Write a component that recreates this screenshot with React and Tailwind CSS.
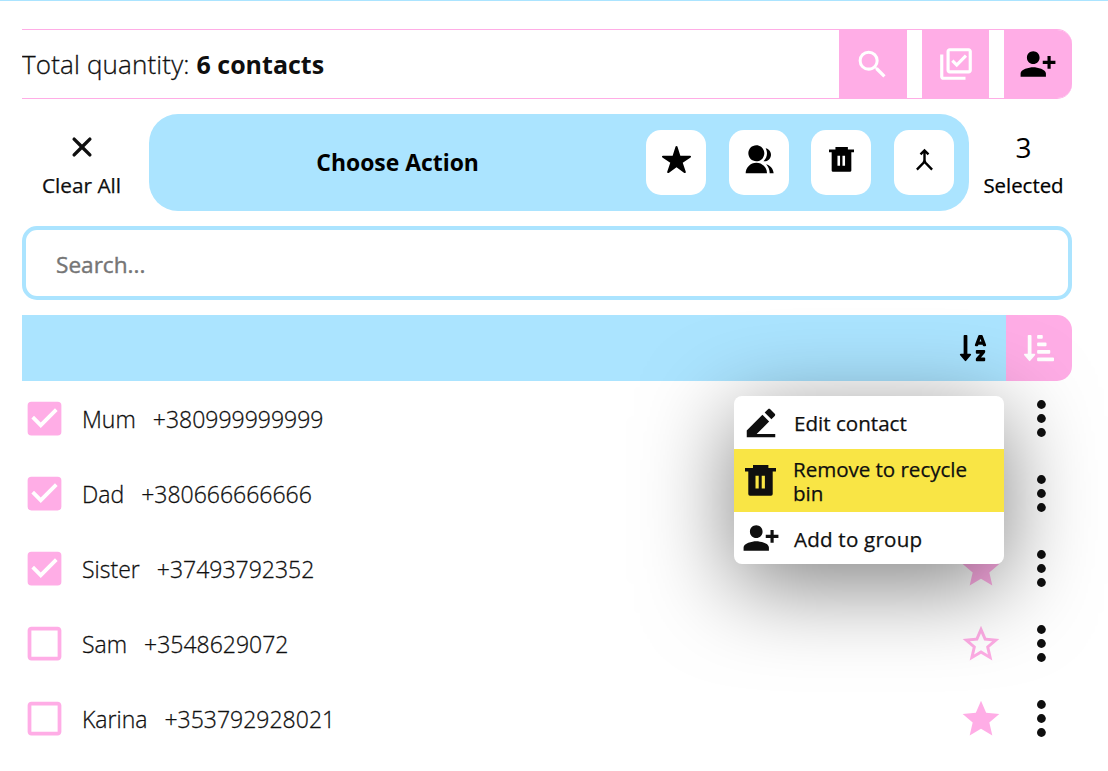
import {
  MdSearch,
  MdOutlineLibraryAddCheck,
  MdPersonAddAlt1,
  MdMerge,
  MdStar,
  MdStarOutline,
  MdCheckBox,
  MdCheckBoxOutlineBlank,
} from "react-icons/md";
import { IoStar, IoClose } from "react-icons/io5";
import { RiGroupFill, RiEdit2Fill } from "react-icons/ri";
import { FaSortAlphaDown, FaSortAmountDownAlt } from "react-icons/fa";

const contacts = [
  { name: "Mum", phone: "+380999999999", checked: true, starred: false },
  { name: "Dad", phone: "+380666666666", checked: true, starred: false },
  { name: "Sister", phone: "+37493792352", checked: true, starred: true },
  { name: "Sam", phone: "+3548629072", checked: false, starred: false },
  { name: "Karina", phone: "+353792928021", checked: false, starred: true },
];

function TrashIcon({ size }) {
  return (
    <svg width={size} height={size} viewBox="0 0 31 31" fill="currentColor">
      <path
        fillRule="evenodd"
        d="M8 0h15.4v3H31v3.4h-3.3V29a1.7 1.7 0 0 1-1.7 1.7H5A1.7 1.7 0 0 1 3.300 29V6.400H0V3h8zM10.500 10.700v12.700h3.200V10.700zM16.700 10.700v12.700h3.200V10.700z"
      />
    </svg>
  );
}

function Dots() {
  return (
    <svg width="10" height="38" viewBox="0 0 10 38" fill="#0f0f0f">
      <circle cx="5.400" cy="5.500" r="4.400" />
      <circle cx="5.400" cy="19.500" r="4.400" />
      <circle cx="5.400" cy="33.500" r="4.400" />
    </svg>
  );
}

function ActionButton({ children }) {
  return (
    <button className="flex h-[65px] w-[60px] items-center justify-center rounded-[15px] bg-white pb-1.5 text-black">
      {children}
    </button>
  );
}

function ContactRow({ contact, children }) {
  return (
    <li className="relative flex h-[75px] items-center text-[23px] font-light text-[#0f0f0f]">
      <span className="flex w-[60px] text-[#ffade6]">
        {contact.checked ? <MdCheckBox size={45} /> : <MdCheckBoxOutlineBlank size={45} />}
      </span>
      <span className="mr-[17px] pt-0.5 [-webkit-text-stroke:0.3px]">{contact.name}</span>
      <span className="flex-1 pt-0.5 [-webkit-text-stroke:0.3px]">{contact.phone}</span>
      <span className="mr-[33px] text-[#ffade6]">
        {contact.starred ? <MdStar size={44} /> : <MdStarOutline size={44} />}
      </span>
      <span className="mr-[26px] pb-px">
        <Dots />
      </span>
      {children}
    </li>
  );
}

function ContextMenu() {
  return (
    <div className="absolute top-[15px] right-[68px] z-10 w-[270px] rounded-lg bg-white text-[20.6px] leading-6 font-normal text-[#0f0f0f] shadow-[0_20px_90px_rgba(0,0,0,0.5)]">
      <div className="flex h-[53px] items-center pl-2">
        <RiEdit2Fill size={38} />
        <span className="ml-[14px] [-webkit-text-stroke:0.25px]">Edit contact</span>
      </div>
      <div className="flex h-[63px] items-center bg-[#f9e545] pl-[11px]">
        <TrashIcon size={31} />
        <span className="ml-[17px] w-[190px] tracking-[-0.05px] [-webkit-text-stroke:0.25px]">
          Remove to recycle bin
        </span>
      </div>
      <div className="flex h-[52px] items-center pl-2">
        <MdPersonAddAlt1 size={38} />
        <span className="ml-[14px] pt-0.5 tracking-[0.2px] [-webkit-text-stroke:0.25px]">Add to group</span>
      </div>
    </div>
  );
}

export default function App() {
  return (
    <main className="h-[771px] w-[1108px] overflow-hidden border-t border-[#abe4ff] bg-white pt-7 pl-[22px] font-['Open_Sans','Noto_Sans',sans-serif] text-[#0f0f0f]">
      <div className="flex w-[1050px] flex-col gap-[15px]">
        <header className="flex h-[70px] items-center gap-[15px] overflow-hidden rounded-r-[15px] border-y border-[#ffade6]">
          <p className="flex-1 text-[26px] font-light tracking-[0.15px] whitespace-nowrap [-webkit-text-stroke:0.3px]">
            Total quantity:{" "}
            <b className="text-[25px] font-bold tracking-normal [-webkit-text-stroke:0px]">6 contacts</b>
          </p>
          <button className="flex h-full w-[68px] items-center justify-center bg-[#ffade6] pr-px text-white">
            <MdSearch size={37} />
          </button>
          <button className="flex h-full w-[67px] items-center justify-center bg-[#ffade6] text-white">
            <MdOutlineLibraryAddCheck size={38} />
          </button>
          <button className="flex h-full w-[68px] items-center justify-center bg-[#ffade6] pr-px text-black">
            <MdPersonAddAlt1 size={38} />
          </button>
        </header>

        <section className="flex h-[97px] items-center">
          <div className="flex w-[119px] flex-col items-center pt-[3px]">
            <IoClose size={36} />
            <span className="mt-[5px] text-[20.8px] leading-[30px] [-webkit-text-stroke:0.25px]">Clear All</span>
          </div>
          <div className="ml-2 flex h-[97px] w-[820px] items-center rounded-[29px] bg-[#abe4ff] pr-[15px]">
            <span className="flex-1 pt-0.5 text-center text-[22.9px] font-bold text-black">Choose Action</span>
            <div className="flex gap-[22.6px]">
              <ActionButton><IoStar size={31} /></ActionButton>
              <ActionButton><RiGroupFill size={32} /></ActionButton>
              <ActionButton><TrashIcon size={25} /></ActionButton>
              <ActionButton><MdMerge size={29} /></ActionButton>
            </div>
          </div>
          <div className="flex flex-1 flex-col items-center pt-[3px] pl-[6px] text-black">
            <span className="text-[28px] leading-9">3</span>
            <span className="mt-[5px] text-[20.4px] leading-[30px] [-webkit-text-stroke:0.25px]">Selected</span>
          </div>
        </section>

        <input
          className="h-[74px] w-full rounded-[15px] border-4 border-[#abe4ff] bg-white px-[30px] pt-0.5 text-[22.6px] outline-none [-webkit-text-stroke:0.4px] placeholder:text-[#757575]"
          placeholder="Search..."
        />

        <div className="flex h-[66px]">
          <div className="flex flex-1 items-center justify-end bg-[#abe4ff] pr-[18px] text-black">
            <FaSortAlphaDown size={30} />
          </div>
          <div className="flex w-[66px] items-center justify-center rounded-r-[15px] bg-[#ffade6] text-white">
            <FaSortAmountDownAlt size={30} />
          </div>
        </div>
      </div>

      <ul className="w-[1050px]">
        {contacts.map((contact, i) => (
          <ContactRow key={contact.name} contact={contact}>
            {i === 0 && <ContextMenu />}
          </ContactRow>
        ))}
      </ul>
    </main>
  );
}
